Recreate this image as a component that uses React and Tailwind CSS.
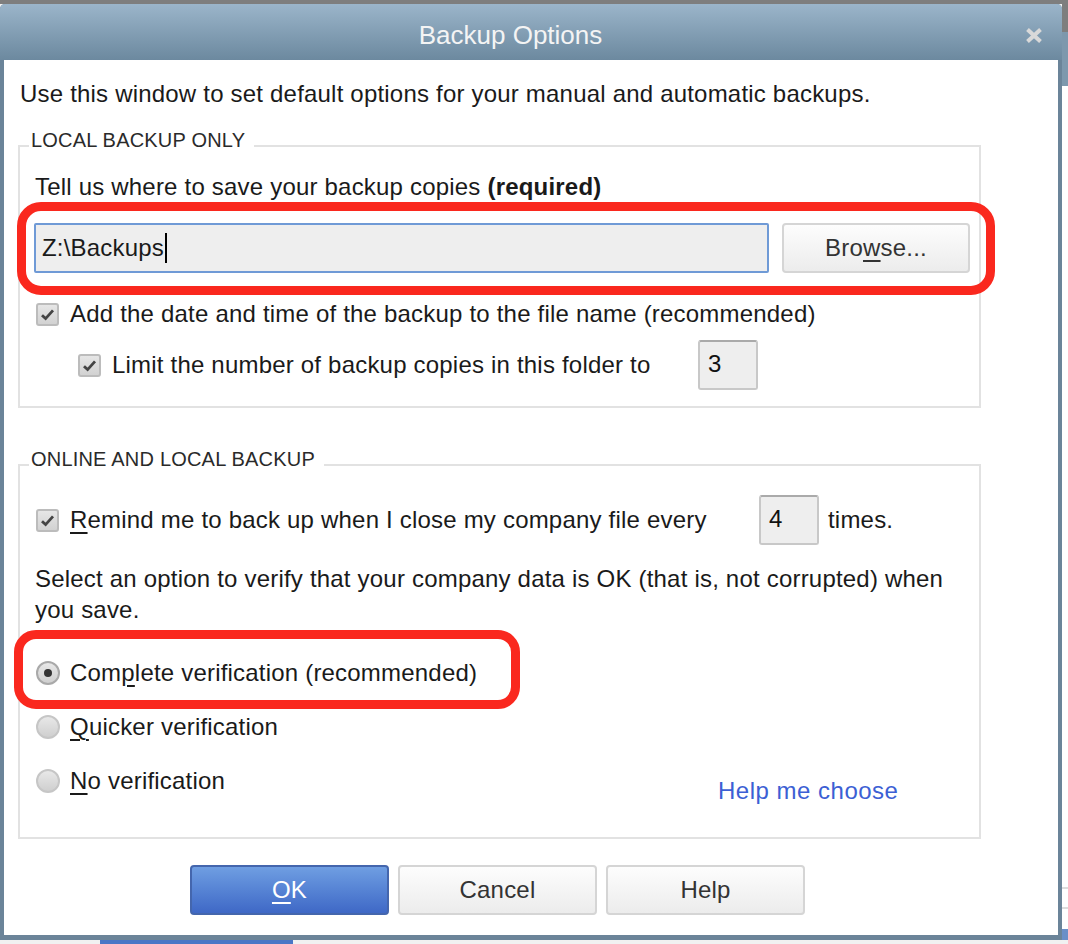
import React from 'react'

const U = ({ children }) => (
  <u className="underline decoration-[2px] underline-offset-[4px]">{children}</u>
)

function Checkbox({ className = '' }) {
  return (
    <span
      className={`flex h-[23px] w-[23px] shrink-0 items-center justify-center rounded-[3px] border-2 border-[#bcbcbc] bg-linear-to-b from-[#e6e6e6] to-[#d2d2d2] ${className}`}
    >
      <svg width="15" height="13" viewBox="0 0 15 13">
        <path d="M2 7.2l3.6 3.4L13 2.4" fill="none" stroke="#444" strokeWidth="2.8" />
      </svg>
    </span>
  )
}

function Radio({ checked }) {
  return (
    <span
      className={`ml-[2px] flex h-[24px] w-[24px] shrink-0 items-center justify-center rounded-full border-2 bg-linear-to-b from-[#e8e8e8] to-[#cfcfcf] ${
        checked ? 'border-[#a9a9a9]' : 'border-[#c6c6c6]'
      }`}
    >
      {checked && <span className="h-[8px] w-[8px] rounded-full bg-[#333]" />}
    </span>
  )
}

function SmallBox({ value }) {
  return (
    <div className="flex h-[50px] w-[60px] shrink-0 items-center rounded-[3px] border-2 border-[#c8c8c8] border-t-[#aaaaaa] bg-[#eeeeee] pl-[8px] pb-[3px] text-[24px] text-[#111]">
      {value}
    </div>
  )
}

function Button({ children, primary, width = 'w-[199px]' }) {
  return (
    <button
      className={
        primary
          ? `flex h-[50px] ${width} items-center justify-center rounded-[4px] border-2 border-[#4466ad] bg-linear-to-b from-[#6f9ee2] to-[#3f68c6] text-[24px] text-white`
          : `flex h-[50px] ${width} items-center justify-center rounded-[4px] border-2 border-[#d5d5d5] bg-linear-to-b from-[#fdfdfd] to-[#ececec] text-[24px] text-[#333]`
      }
    >
      {children}
    </button>
  )
}

function GroupBox({ title, className = '', children }) {
  return (
    <fieldset className={`ml-[14px] w-[963px] border-2 border-[#e2e2e2] ${className}`}>
      <legend className="ml-[9px] pl-[2px] pr-[9px] pb-[12px] text-[20px] leading-[24px] text-[#2a2a2a]">
        {title}
      </legend>
      <div className="pl-[14px]">{children}</div>
    </fieldset>
  )
}

export default function App() {
  return (
    <div className="relative flex h-[944px] w-[1068px] flex-col overflow-hidden bg-[#f1f1f1] font-['Liberation_Sans',Arial,sans-serif] tracking-[0.2px] text-[#1a1a1a]">
      <div className="h-[4px] bg-[#7e7e7e]" />
      <div className="flex h-[936px]">
        {/* dialog window */}
        <div className="flex w-[1062px] flex-col rounded-t-[5px] bg-[#6b8499]">
          <div className="flex h-[56px] items-center rounded-t-[5px] bg-linear-to-b from-[#9bb5ca] to-[#6c899f] pt-[6px]">
            <div className="flex-1 text-center text-[26px] tracking-normal text-[#f4f4f4]">
              Backup Options
            </div>
            <div className="w-[41px] pl-[4px]">
              <svg width="18" height="17" viewBox="0 0 18 17">
                <path d="M2.5 2.5l13 12M15.5 2.5l-13 12" stroke="#d9d9d9" strokeWidth="4" />
              </svg>
            </div>
          </div>

          <div className="mx-[4px] mb-[5px] flex-1 bg-white pt-[20px]">
            <p className="ml-[16px] text-[24px] leading-[28px]">
              Use this window to set default options for your manual and automatic backups.
            </p>

            <GroupBox title="LOCAL BACKUP ONLY" className="mt-[20px]">
              <p className="ml-[1px] pt-[8px] text-[24px] leading-[30px]">
                Tell us where to save your backup copies <b>(required)</b>
              </p>
              <div className="mt-[21px] flex h-[50px]">
                <div className="flex w-[735px] items-center rounded-[2px] border-2 border-[#6f9ad6] bg-[#eeeeee] pl-[6px] text-[24px]">
                  Z:\Backups
                  <span className="ml-[1px] inline-block h-[30px] w-[2px] bg-black" />
                </div>
                <div className="ml-[13px]">
                  <Button width="w-[188px]">
                    Bro<U>w</U>se...
                  </Button>
                </div>
              </div>
              <div className="mt-[26px] flex h-[30px] items-center text-[24px]">
                <Checkbox className="ml-[2px]" />
                <span className="ml-[11px] whitespace-nowrap">
                  Add the date and time of the backup to the file name (recommended)
                </span>
              </div>
              <div className="mt-[11px] box-content flex h-[50px] items-center pb-[16px] text-[24px]">
                <Checkbox className="ml-[44px]" />
                <span className="ml-[11px] w-[586px] whitespace-nowrap">
                  Limit the number of backup copies in this folder to
                </span>
                <SmallBox value="3" />
              </div>
            </GroupBox>

            <GroupBox title="ONLINE AND LOCAL BACKUP" className="mt-[39px]">
              <div className="box-content flex h-[50px] items-center pt-[12px] text-[24px]">
                <Checkbox className="ml-[2px]" />
                <span className="ml-[11px] w-[689px] whitespace-nowrap">
                  <U>R</U>emind me to back up when I close my company file every
                </span>
                <SmallBox value="4" />
                <span className="ml-[9px]">times.</span>
              </div>
              <p className="ml-[1px] mt-[18px] text-[24px] leading-[31px]">
                Select an option to verify that your company data is OK (that is, not corrupted) when
                <br />
                you save.
              </p>
              <div className="mt-[33px] flex flex-col gap-[24px] pb-[41px] text-[24px]">
                <div className="flex h-[30px] items-center">
                  <Radio checked />
                  <span className="ml-[10px]">
                    Com<U>p</U>lete verification (recommended)
                  </span>
                </div>
                <div className="flex h-[30px] items-center">
                  <Radio />
                  <span className="ml-[10px]">
                    <U>Q</U>uicker verification
                  </span>
                </div>
                <div className="flex h-[30px] items-start">
                  <div className="flex h-[30px] w-[684px] items-center">
                    <Radio />
                    <span className="ml-[10px]">
                      <U>N</U>o verification
                    </span>
                  </div>
                  <a className="pt-[10px] leading-[30px] tracking-[0.5px] text-[#3c5fd4]">Help me choose</a>
                </div>
              </div>
            </GroupBox>

            <div className="ml-[186px] mt-[26px] flex gap-[9px]">
              <Button primary>
                <U>O</U>K
              </Button>
              <Button>Cancel</Button>
              <Button>Help</Button>
            </div>
          </div>
        </div>

        {/* window behind, on the right */}
        <div className="flex flex-1 flex-col">
          <div className="h-[28px] bg-[#7e7e7e]" />
          <div className="h-[54px] bg-[#7d98ad]" />
          <div className="flex flex-1 flex-col bg-white">
            <div className="mt-[801px] h-[2px] bg-[#dddddd]" />
            <div className="mt-[18px] h-[2px] bg-[#dddddd]" />
            <div className="mt-[20px] flex-1 bg-[#6a8fc8]" />
          </div>
        </div>
      </div>
      <div className="flex flex-1">
        <div className="ml-[100px] w-[193px] bg-[#4a76c6]" />
      </div>

      {/* red annotation outlines */}
      <div className="absolute left-[17px] top-[202px] h-[93px] w-[978px] rounded-[24px] border-[9px] border-[#fa281e]" />
      <div className="absolute left-[14px] top-[630px] h-[79px] w-[506px] rounded-[22px] border-[9px] border-[#fa281e]" />
    </div>
  )
}
